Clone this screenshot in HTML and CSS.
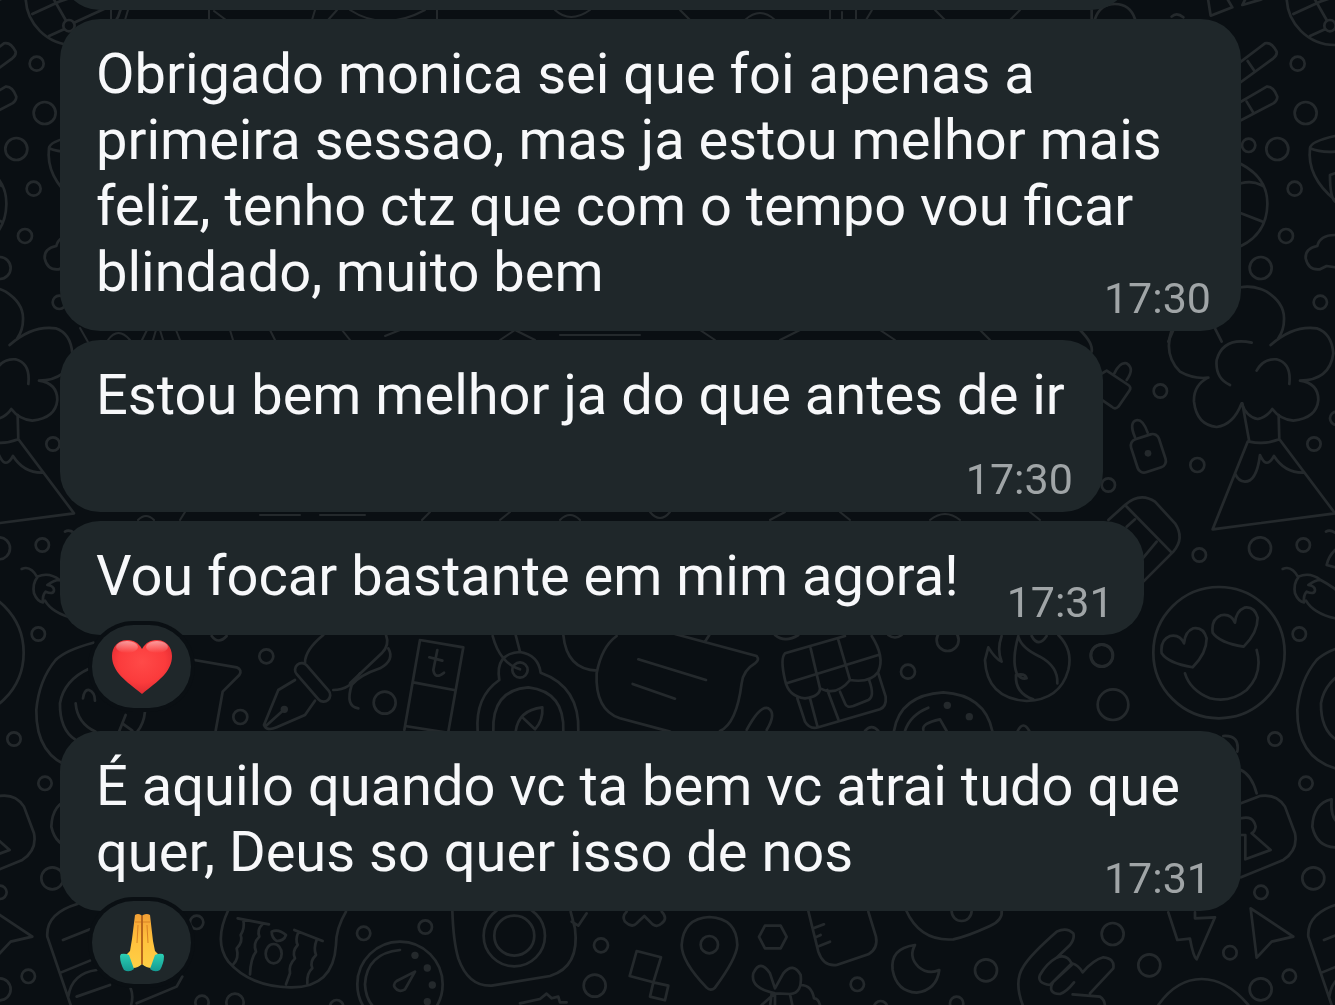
FILE: index.html
```
<!DOCTYPE html>
<html lang="pt-BR">
<head>
<meta charset="utf-8">
<meta name="viewport" content="width=device-width, initial-scale=1">
<title>Conversa</title>
<link rel="stylesheet" href="styles.css">
</head>
<body>
<!-- doodle wallpaper, one tile repeated -->
<svg class="wallpaper" aria-hidden="true">
  <defs>
    <g id="doodles" class="doodle">
      <g transform="translate(1080 0) scale(.3333)">
        <circle cx="765" cy="-10" r="145"/><path d="M640 42L720 5L765 -10M700 -10L740 60M690 108L735 88M765 68L860 25"/><circle cx="750" cy="77" r="17"/>
        <path d="M440 217L555 130Q575 125 590 155Q592 165 580 175L450 270M503 183L525 215M440 330L560 260Q580 258 592 290Q592 302 580 310L450 378M500 305L520 338"/>
        <circle cx="653" cy="191" r="21"/><circle cx="677" cy="339" r="33"/><circle cx="506" cy="436" r="20"/><circle cx="592" cy="447" r="33"/><circle cx="644" cy="566" r="21"/><circle cx="618" cy="708" r="21"/><circle cx="542" cy="804" r="33"/><circle cx="721" cy="907" r="20"/>
        <path d="M483 492Q565 535 562 615Q560 700 483 738M483 550Q520 540 548 558M483 640L548 665"/>
        <path d="M765 408Q690 425 690 445Q680 530 765 600M690 445Q720 458 765 455M765 520L750 525Q750 590 765 605"/>
        <path d="M765 705Q720 705 712 738Q675 745 677 775Q685 812 720 808L740 798L765 802"/>
        <path d="M483 862Q520 855 560 875Q615 910 612 960Q612 990 595 1015M280 990L265 1025M405 985L425 1025"/>
        <path d="M383 -10L392 47L457 22L435 -15M500 -10L487 15L545 -2M45 57Q60 12 105 12Q150 12 165 57M35 30V57M275 50Q290 35 310 52"/>
      </g>
      <g transform="translate(1080 330) scale(.3333)">
        <path d="M275 0Q250 75 300 125Q340 148 385 143Q340 165 342 215Q350 285 410 291Q460 285 485 220Q500 262 533 267Q560 262 577 237Q600 268 640 272Q710 265 715 210Q715 160 660 152Q750 150 760 70Q755 10 710 -5Q640 -15 572 45"/>
        <path d="M515 38Q430 20 410 90Q405 145 450 165M530 122Q550 85 590 88Q635 100 628 162M487 220L508 335Q555 345 598 328L596 255M503 335L398 598L765 550L600 330M465 430Q475 455 495 455Q530 455 540 375Q560 420 582 378Q615 430 672 428"/>
        <path d="M50 140L80 122L145 165Q155 172 148 182L115 230Q105 240 95 230L60 206M103 130Q120 95 140 100Q165 115 140 150M0 0Q40 40 35 65"/>
        <rect x="161" y="318" width="88" height="104" rx="20" transform="rotate(-18 205 370)"/><path d="M165 322Q145 275 172 270Q190 270 203 308"/><circle class="dot" cx="204" cy="370" r="10"/>
        <circle cx="241" cy="183" r="20"/><circle cx="352" cy="405" r="21"/><circle cx="85" cy="465" r="20"/><circle cx="702" cy="342" r="20"/><circle cx="770" cy="265" r="20"/><circle cx="540" cy="655" r="33"/><circle cx="670" cy="645" r="20"/><circle cx="358" cy="675" r="20"/><circle cx="658" cy="912" r="20"/><circle cx="66" cy="976" r="33"/>
        <path d="M85 570L135 525Q180 485 225 515L285 580Q315 625 280 665L190 755M135 525L275 668M140 590L165 568M188 685L230 635"/>
        <circle cx="417" cy="968" r="197"/>
        <path d="M312 940Q300 912 270 918Q240 930 245 970Q265 1000 338 1012Q380 970 380 925Q370 890 340 895Q315 905 312 940ZM465 878Q453 850 423 856Q393 868 398 908Q418 938 491 950Q533 908 533 863Q523 828 493 833Q468 843 465 878ZM530 960Q550 1030 500 1080Q450 1120 390 1105Q330 1080 315 1030"/>
        <path d="M608 717Q635 705 655 742Q640 760 645 790Q655 815 672 817Q670 795 680 785Q705 795 705 780Q705 768 685 765Q705 750 722 750Q690 725 655 740M722 750Q760 770 800 805M678 812Q700 850 765 865M738 605Q750 598 765 608M765 660Q745 680 740 705L765 712"/>
      </g>
      <g transform="translate(1080 660) scale(.3333)">
        <circle cx="99" cy="134" r="46"/><circle cx="585" cy="237" r="20"/><circle cx="678" cy="370" r="20"/><circle cx="700" cy="655" r="33"/><circle cx="543" cy="697" r="20"/><circle cx="450" cy="878" r="20"/><circle cx="628" cy="949" r="20"/><circle cx="542" cy="988" r="33"/>
        <path d="M823 -52Q740 -30 710 0Q660 60 652 150Q650 290 765 325M813 25Q735 60 723 130Q722 210 770 240M770 130Q775 190 830 215M792 115Q796 88 810 90Q828 97 828 122M920 165L900 215M978 155Q975 190 955 215M910 190L940 212"/>
        <path d="M430 228Q480 225 472 275M483 330Q515 345 530 400M483 430L540 408Q590 400 615 440L645 520Q655 570 610 600L483 652M483 475Q520 465 527 500Q525 515 515 520L572 570L496 598V525H483"/>
        <path d="M755 418Q700 430 697 500Q710 560 765 562M755 418Q750 470 775 490"/>
        <path d="M265 757L292 840L330 836Q340 890 350 898L405 772L345 775V757M512 745L530 893L575 845L640 830Z"/>
        <path d="M775 732Q680 760 685 830L755 1035M732 840L813 808M725 938L813 902M748 1010Q758 940 833 930M773 1010L873 975M953 1030L1073 980L1090 950M935 985Q945 1010 935 1040"/>
        <path d="M235 1035Q290 957 365 957Q440 957 505 1035"/>
      </g>
      <g transform="translate(60 610) scale(.3333)">
        <path d="M455 78Q475 105 500 78M403 150L530 172Q548 180 538 195L488 245L467 362"/>
        <circle cx="619" cy="139" r="21"/><circle cx="541" cy="321" r="21"/>
        <path d="M790 75Q735 120 735 158M705 210L655 240L612 345Q620 365 650 352L735 315L765 272M615 350L665 305M820 240Q870 240 900 190"/><rect x="688" y="197" width="140" height="40" rx="20" transform="rotate(49 758 217)"/><circle class="dot" cx="673" cy="298" r="11"/>
      </g>
      <g transform="translate(350 620) scale(.3333)">
        <path d="M108 45Q120 75 95 100L0 190M115 85Q135 120 90 145Q30 165 5 195Q-15 260 25 265M210 60L340 82L295 335M210 60L163 330M190 187L312 210M165 318L290 338M262 90L250 150Q255 180 282 158M238 112L277 122"/>
        <circle cx="104" cy="248" r="33"/><circle cx="510" cy="150" r="23"/>
        <path d="M428 48Q450 130 510 148M497 45L510 95M448 180Q435 100 510 96Q565 105 572 158Q690 200 685 335M448 180Q375 230 383 335M430 335Q425 210 535 202Q645 215 640 335M497 335Q505 270 577 262Q580 300 555 328L515 290"/>
        <path d="M640 45Q650 150 742 152M800 48Q755 80 740 160Q735 270 810 295L960 335M975 42L1220 108Q1230 120 1215 130Q1180 150 1175 190Q1160 310 1110 333M1065 65L1078 45M865 118L1068 180M848 192L975 236"/>
      </g>
      <g transform="translate(740 620) scale(.3333)">
        <path d="M20 330Q60 255 85 265Q110 280 80 330M105 45Q135 70 175 45M445 45Q465 60 485 45"/>
        <path d="M315 48L135 100Q120 115 135 180Q145 230 195 235Q240 230 240 205Q290 230 330 180Q390 190 415 155Q435 110 395 48M140 190L415 105M212 85L240 205M295 60L330 180M172 235L195 305Q210 330 235 322L420 268Q440 260 437 230L415 160M210 235L232 318M262 210L295 298M300 215L315 250Q320 265 340 258L385 240Q405 230 388 182"/>
        <circle cx="504" cy="155" r="21"/><circle cx="623" cy="60" r="33"/><circle cx="1085" cy="107" r="33"/>
        <path d="M462 333Q480 225 610 217Q735 225 757 333M495 333Q510 285 565 263M550 330Q545 310 600 298L620 333M375 333Q395 310 415 333M833 333Q850 300 868 333"/><circle class="dot" cx="622" cy="256" r="11"/><circle class="dot" cx="688" cy="290" r="11"/>
        <path d="M955 45Q1000 90 985 150Q960 240 860 243Q740 235 735 120L745 82Q765 115 785 125Q770 90 785 48M835 48Q815 120 830 160Q845 180 860 175Q855 158 828 165Q825 220 880 238M835 50Q845 85 900 110Q955 140 952 190M875 48Q895 85 920 48"/>
      </g>
      <g transform="translate(180 895) scale(.3333)">
        <circle cx="50" cy="82" r="20"/><circle cx="551" cy="115" r="20"/><circle cx="736" cy="96" r="20"/><circle cx="66" cy="322" r="20"/><circle cx="165" cy="322" r="26"/><circle cx="470" cy="335" r="20"/>
        <path d="M145 45Q100 140 145 200Q210 275 330 277Q460 280 468 150Q468 100 498 50M173 70L267 88M343 105L428 138M190 75Q195 100 182 120Q190 140 170 160Q178 190 160 208M247 88Q230 105 238 125Q218 145 228 170Q212 190 210 238M355 112Q345 135 353 150Q335 170 345 190Q325 210 330 235L318 268M410 135Q400 160 408 180Q388 200 397 220Q380 235 382 265"/>
        <path d="M275 110Q295 100 318 120Q312 138 290 138Q275 128 275 110Z"/><ellipse cx="281" cy="176" rx="24" ry="29"/>
        <circle cx="660" cy="268" r="128"/><path d="M660 165Q560 175 555 268Q557 310 580 335M705 230L675 283Q655 295 643 275Q640 265 650 258Z"/>
        <circle class="dot" cx="705" cy="181" r="11"/><circle class="dot" cx="742" cy="219" r="11"/><circle class="dot" cx="757" cy="270" r="11"/><circle class="dot" cx="742" cy="320" r="11"/>
        <circle cx="1003" cy="122" r="92"/><circle cx="1003" cy="122" r="60"/><path d="M817 45Q820 140 835 190Q865 275 935 272L1110 243Q1200 215 1185 100L1172 50M1175 80L1195 92L1220 55M1020 325L1080 312L1100 296L1115 310L1135 305L1140 322H1160"/>
      </g>
      <g transform="translate(560 895) scale(.3333)">
        <circle cx="123" cy="151" r="21"/><circle cx="104" cy="272" r="33"/><circle cx="892" cy="268" r="20"/><circle cx="448" cy="149" r="26"/><circle cx="1205" cy="48" r="30"/><circle cx="962" cy="338" r="20"/><circle cx="1190" cy="325" r="20"/>
        <path d="M200 50Q185 65 195 80Q215 100 230 85L253 63L278 88Q292 98 305 85Q325 70 305 50M230 168L303 187L280 262L209 243ZM280 262L325 272L315 316L270 305Z"/>
        <path d="M448 66Q530 70 532 150Q530 190 465 278Q452 290 440 278Q365 200 365 150Q370 70 448 66ZM615 92H662L680 126L662 160H615L597 126Z"/>
        <path d="M645 295Q570 280 580 235Q600 190 630 235L645 280L670 235Q700 200 722 240Q728 295 690 297ZM645 295L605 330M635 295L630 335M645 295V335M690 297L698 335M722 270Q755 270 762 310Q775 310 780 330"/>
        <path d="M745 48L775 170Q790 215 830 210L925 178Q955 160 948 125L925 50M760 100L792 88M765 128L782 120M778 153L810 140"/>
        <path d="M1038 45Q1080 140 1180 133Q1220 125 1290 93Q1330 75 1325 45M1065 150Q990 160 998 225Q1010 290 1070 293Q1130 285 1138 225Q1105 240 1075 215Q1045 185 1065 150Z"/>
      </g>
      <g transform="translate(900 895) scale(.3333)">
        <circle cx="638" cy="117" r="33"/><circle cx="748" cy="211" r="33"/><circle cx="258" cy="226" r="33"/>
        <path d="M370 335Q340 260 370 215Q390 180 470 110Q500 95 520 115Q525 130 510 150L470 188M470 188Q500 175 515 205L450 270Q410 265 420 240Q440 205 470 188M515 205Q535 210 548 232Q580 195 610 187Q645 190 640 220L570 295M515 210L460 260Q440 295 480 297Q500 290 522 262M518 298L600 305Q615 315 615 335"/>
      </g>
      <!-- slivers between the bubbles -->
      <path d="M111 10V20M128 10L125 20M209 10V20M214 11L226 20M315 10L312 20M337 10L328 20M350 10Q384 32 425 10M437 10V20M555 10Q570 24 590 10M680 10L690 20M745 20Q760 6 775 20M830 20V10M842 20V12M856 20V10M866 20L872 10M935 10L945 20M1020 10L1010 20"/>
      <path d="M80 328L88 342M108 340Q118 326 130 340M142 340L147 330M153 340L156 330M163 340L160 330M176 330L180 340M230 330L233 340M270 330L275 340M342 330L350 340M385 336L400 330M500 340L515 330L535 340M560 335H640M700 330L715 340M780 340L800 330M880 330L895 340M980 330L990 340"/>
      <path d="M138 520Q146 512 154 520M180 520L185 512M260 515H300M320 515H365M430 512L422 520M500 520L510 512M560 520Q570 510 580 520M650 512Q660 524 670 512M770 520L785 512M840 512L850 520M930 520Q945 508 960 520M1030 512L1040 520"/>
    </g>
    <pattern id="tile" width="1261" height="1005" patternUnits="userSpaceOnUse">
      <use href="#doodles"/>
      <use href="#doodles" x="-1261"/>
    </pattern>
  </defs>
  <rect width="100%" height="100%" fill="url(#tile)"/>
</svg>

<main class="chat">
  <div class="bubble bubble-cut"></div>

  <article class="bubble">
    <p class="text wrapped">Obrigado monica sei que foi apenas a primeira sessao, mas ja estou melhor mais feliz, tenho ctz que com o tempo vou ficar blindado, muito bem <time class="time">17:30</time></p>
  </article>

  <article class="bubble">
    <p class="text">Estou bem melhor ja do que antes de ir</p>
    <time class="time">17:30</time>
  </article>

  <article class="bubble inline">
    <p class="text">Vou focar bastante em mim agora!</p>
    <time class="time">17:31</time>
  </article>
  <button class="reaction" type="button" aria-label="Amei">
    <svg width="62" height="56" viewBox="0 0 62 56">
      <defs>
        <radialGradient id="heart" cx=".5" cy=".4" r=".65"><stop offset="0" stop-color="#ff4a48"/><stop offset=".6" stop-color="#fb3b3c"/><stop offset="1" stop-color="#d92830"/></radialGradient>
        <linearGradient id="shine" x2="0" y2="1"><stop offset="0" stop-color="#fff" stop-opacity=".5"/><stop offset="1" stop-color="#fff" stop-opacity="0"/></linearGradient>
      </defs>
      <path fill="url(#heart)" d="M31 10C27 3 22 1 16 1C7 1 1 8 1 17C1 33 15 42 31 55C47 42 61 33 61 17C61 8 55 1 46 1C40 1 35 3 31 10Z"/>
      <ellipse fill="url(#shine)" cx="16" cy="8" rx="11" ry="6"/>
      <ellipse fill="url(#shine)" cx="46" cy="8" rx="11" ry="6"/>
    </svg>
  </button>

  <article class="bubble">
    <p class="text wrapped">É aquilo quando vc ta bem vc atrai tudo que quer, Deus so quer isso de nos <time class="time">17:31</time></p>
  </article>
  <button class="reaction" type="button" aria-label="Gratidão">
    <svg width="46" height="60" viewBox="0 0 46 60">
      <defs>
        <linearGradient id="skin" x2="0" y2="1"><stop offset="0" stop-color="#f3a035"/><stop offset=".5" stop-color="#ffc23d"/><stop offset="1" stop-color="#ffd046"/></linearGradient>
        <linearGradient id="cuff" x2="0" y2="1"><stop offset="0" stop-color="#2bd0b4"/><stop offset="1" stop-color="#159a92"/></linearGradient>
      </defs>
      <path fill="url(#skin)" d="M16 2Q19 0 22 2L23 3L24 2Q28 0 31 2L34 28L36 38L41 43L33 55Q27 55 23 51Q19 55 14 55L6 43L11 38L13 26Z"/>
      <path fill="none" stroke="#b8671d" stroke-width="2" d="M23 3V51"/>
      <path fill="none" stroke="#d98224" d="M16 9H22M24 9H31M19 12L18 30M28 12L29 30"/>
      <path fill="url(#cuff)" d="M2 41Q6 40 10 42L15 56Q10 60 5 57Q1 50 1 43ZM44 41Q40 40 36 42L31 56Q36 60 41 57Q45 50 45 43Z"/>
    </svg>
  </button>
</main>
</body>
</html>
```
FILE: styles.css
```
* { box-sizing: border-box; }
body { margin: 0; background: #0a0f13; font-family: Roboto, "Noto Sans", sans-serif; }

.wallpaper { position: fixed; top: 0; left: 0; z-index: -1; width: 100%; height: 100%; }
.doodle { fill: none; stroke: #24292c; stroke-width: 2px; stroke-linecap: round; stroke-linejoin: round; }
.doodle g { stroke-width: 8px; }
.doodle .dot { fill: #24292c; stroke: none; }

.chat { display: flex; flex-direction: column; align-items: flex-start; height: 100vh; padding: 0 60px; overflow: hidden; }

.bubble { display: flex; flex-direction: column; flex-shrink: 0; max-width: 1181px; margin-bottom: 9px; padding: 22px 30px 13px 36px; border-radius: 40px; background: #1f272a; }
.bubble-cut { width: 1071px; height: 80px; margin-top: -70px; }

.text { margin: 0 8px 13px 0; color: #f7f8fa; font-size: 56px; line-height: 66px; }
.time { align-self: flex-end; margin-top: 18px; color: #a0a5a7; font-size: 43px; line-height: 40px; }

/* time shares the last line of a wrapped text */
.wrapped { margin: 0; }
.wrapped .time { float: right; margin-top: 39px; }

.inline { flex-direction: row; }
.inline .text { margin-right: 48px; }
.inline .time { margin-top: 0; }

.reaction { display: flex; align-items: center; justify-content: center; flex-shrink: 0; width: 99px; height: 83px; margin: -19px 0 23px 32px; padding: 0; border: 0; border-radius: 42px; background: #1f272a; box-shadow: 0 0 0 4px #0a0f13; }
```
